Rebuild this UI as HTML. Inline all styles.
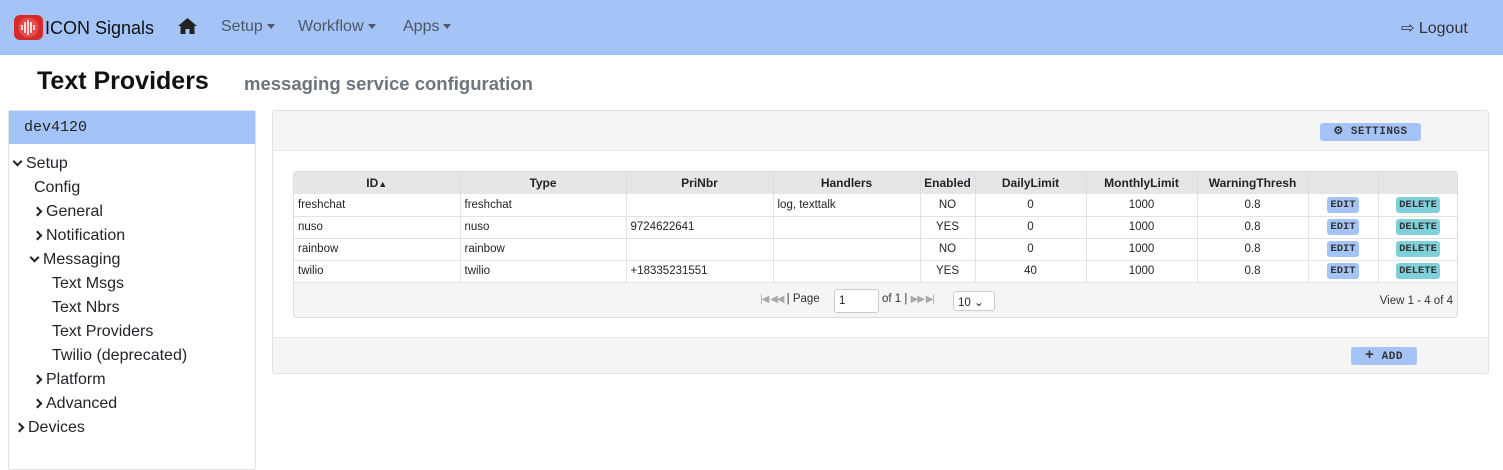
<!DOCTYPE html>
<html><head><meta charset="utf-8"><style>
*{box-sizing:border-box;margin:0;padding:0}
body{width:1503px;height:440px;overflow:hidden;background:#fff;font-family:"Liberation Sans",sans-serif;color:#212529;position:relative}
.nav{position:absolute;left:0;top:0;width:1503px;height:55px;background:#a4c4f8}
.abs{position:absolute;white-space:nowrap}
.navlink{font-size:16px;color:#4d5766;top:18px}
.car{display:inline-block;border-left:4px solid transparent;border-right:4px solid transparent;border-top:5px solid #4d5766;vertical-align:middle;margin-left:4px}
.side{position:absolute;left:8px;top:110px;width:248px;height:360px;border:1px solid #dee2e6;border-radius:3px}
.side .hd{height:33px;background:#a4c4f8;font-family:"Liberation Mono",monospace;font-size:15px;padding:8px 0 0 15px;color:#222}
.si{position:absolute;font-size:16px;color:#212529;white-space:nowrap}
.chev{display:inline-block;width:7px;height:7px;border-right:2px solid #222;border-bottom:2px solid #222;margin-right:5px;vertical-align:middle}
.panel{position:absolute;left:272px;top:110px;width:1217px;height:264px;border:1px solid #dee2e6;border-radius:3px}
.ph{height:40px;background:#f5f5f5;border-bottom:1px solid #e5e5e5}
.pf{position:absolute;left:0;bottom:0;width:100%;height:36px;background:#f5f5f5;border-top:1px solid #e5e5e5}
.btn{position:absolute;background:#a4c4f8;border-radius:3px;font-family:"Liberation Mono",monospace;font-size:11px;font-weight:bold;color:#333;text-align:center;letter-spacing:.5px}
.grid{position:absolute;left:293px;top:171px;width:1165px;height:147px;border:1px solid #dcdcdc;border-radius:4px;background:#f5f5f5;overflow:hidden}
table{border-collapse:collapse;table-layout:fixed;font-size:11.5px}
th{height:22px;background:#e6e6e6;font-weight:bold;font-size:12px;border-right:1px solid #ddd}
td{height:22px;background:#fff;border-right:1px solid #e3e3e3;border-bottom:1px solid #e3e3e3;padding:0 4px;white-space:nowrap}
.c{text-align:center}
.b{display:inline-block;font-family:"Liberation Mono",monospace;font-size:10.5px;font-weight:bold;padding:2px 3px;border-radius:3px;color:#333;line-height:12px}
.e{background:#a4c4f8}.d{background:#80d0dc}
.pg{color:#aaa;font-size:10px;letter-spacing:-1px}
</style></head><body>
<div class="nav"></div>
<svg class="abs" style="left:14px;top:15px" width="29" height="25" viewBox="0 0 29 25"><rect x="0" y="0" width="29" height="25" rx="6" fill="#d42a2a"/><circle cx="14.5" cy="12.5" r="10" fill="#e84a4a"/><g stroke="#fff" stroke-width="1.6"><line x1="8" y1="10" x2="8" y2="15"/><line x1="11" y1="7" x2="11" y2="18"/><line x1="14" y1="5" x2="14" y2="20"/><line x1="17" y1="7" x2="17" y2="18"/><line x1="20" y1="10" x2="20" y2="15"/></g></svg>
<div class="abs" style="left:45px;top:18px;font-size:18px;color:#111">ICON Signals</div>
<svg class="abs" style="left:178px;top:18px" width="19" height="16" viewBox="0 0 19 16"><path d="M9.5 0 L19 8 L16.5 8 L16.5 16 L11.5 16 L11.5 11 L7.5 11 L7.5 16 L2.5 16 L2.5 8 L0 8 Z" fill="#222"/></svg>
<div class="abs navlink" style="left:221px">Setup<span class="car"></span></div>
<div class="abs navlink" style="left:298px">Workflow<span class="car"></span></div>
<div class="abs navlink" style="left:403px">Apps<span class="car"></span></div>
<div class="abs navlink" style="left:1401px;color:#333">⇨ Logout</div>
<div class="abs" style="left:37px;top:67px;font-size:25px;font-weight:bold;color:#111">Text Providers</div>
<div class="abs" style="left:244px;top:73px;font-size:18.5px;font-weight:bold;color:#6c757d">messaging service configuration</div>
<div class="side"><div class="hd">dev4120</div>
<div class="si" style="left:5px;top:44px"><span class="chev" style="transform:rotate(45deg);margin-top:-5px"></span>Setup</div>
<div class="si" style="left:25px;top:68px">Config</div>
<div class="si" style="left:25px;top:92px"><span class="chev" style="transform:rotate(-45deg)"></span>General</div>
<div class="si" style="left:25px;top:116px"><span class="chev" style="transform:rotate(-45deg)"></span>Notification</div>
<div class="si" style="left:22px;top:140px"><span class="chev" style="transform:rotate(45deg);margin-top:-5px"></span>Messaging</div>
<div class="si" style="left:43px;top:164px">Text Msgs</div>
<div class="si" style="left:43px;top:188px">Text Nbrs</div>
<div class="si" style="left:43px;top:212px">Text Providers</div>
<div class="si" style="left:43px;top:236px">Twilio (deprecated)</div>
<div class="si" style="left:25px;top:260px"><span class="chev" style="transform:rotate(-45deg)"></span>Platform</div>
<div class="si" style="left:25px;top:284px"><span class="chev" style="transform:rotate(-45deg)"></span>Advanced</div>
<div class="si" style="left:7px;top:308px"><span class="chev" style="transform:rotate(-45deg)"></span>Devices</div>
</div>
<div class="panel"><div class="ph"></div><div class="pf"></div></div>
<div class="btn" style="left:1320px;top:123px;width:101px;height:18px;line-height:18px">⚙ SETTINGS</div>
<div class="btn" style="left:1351px;top:347px;width:66px;height:18px;line-height:18px"><span style="font-size:15px">+</span> ADD</div>
<div class="grid">
<table style="width:1164px">
<colgroup><col style="width:166px"><col style="width:166px"><col style="width:147px"><col style="width:147px"><col style="width:55px"><col style="width:111px"><col style="width:111px"><col style="width:111px"><col style="width:70px"><col style="width:80px"></colgroup>
<tr><th>ID<span style="font-size:9px">▲</span></th><th>Type</th><th>PriNbr</th><th>Handlers</th><th>Enabled</th><th>DailyLimit</th><th>MonthlyLimit</th><th>WarningThresh</th><th></th><th></th></tr>
<tr><td>freshchat</td><td>freshchat</td><td></td><td>log, texttalk</td><td class="c">NO</td><td class="c">0</td><td class="c">1000</td><td class="c">0.8</td><td class="c"><span class="b e">EDIT</span></td><td class="c"><span class="b d">DELETE</span></td></tr>
<tr><td>nuso</td><td>nuso</td><td>9724622641</td><td></td><td class="c">YES</td><td class="c">0</td><td class="c">1000</td><td class="c">0.8</td><td class="c"><span class="b e">EDIT</span></td><td class="c"><span class="b d">DELETE</span></td></tr>
<tr><td>rainbow</td><td>rainbow</td><td></td><td></td><td class="c">NO</td><td class="c">0</td><td class="c">1000</td><td class="c">0.8</td><td class="c"><span class="b e">EDIT</span></td><td class="c"><span class="b d">DELETE</span></td></tr>
<tr><td>twilio</td><td>twilio</td><td>+18335231551</td><td></td><td class="c">YES</td><td class="c">40</td><td class="c">1000</td><td class="c">0.8</td><td class="c"><span class="b e">EDIT</span></td><td class="c"><span class="b d">DELETE</span></td></tr>
</table>
<div class="abs" style="left:466px;top:121px;font-size:11.5px;color:#333"><span class="pg">|◀ ◀◀</span> | Page</div>
<div class="abs" style="left:540px;top:117px;width:45px;height:24px;border:1px solid #ccc;border-radius:3px;background:#fff;font-size:11.5px;padding:5px 4px">1</div>
<div class="abs" style="left:588px;top:121px;font-size:11.5px;color:#333">of 1 | <span class="pg">▶▶ ▶|</span></div>
<div class="abs" style="left:659px;top:119px;width:42px;height:20px;border:1px solid #ccc;border-radius:3px;background:#fff;font-size:11.5px;padding:3px 4px">10 ⌄</div>
<div class="abs" style="right:4px;top:123px;font-size:11.5px;color:#333">View 1 - 4 of 4</div>
</div>
</body></html>
